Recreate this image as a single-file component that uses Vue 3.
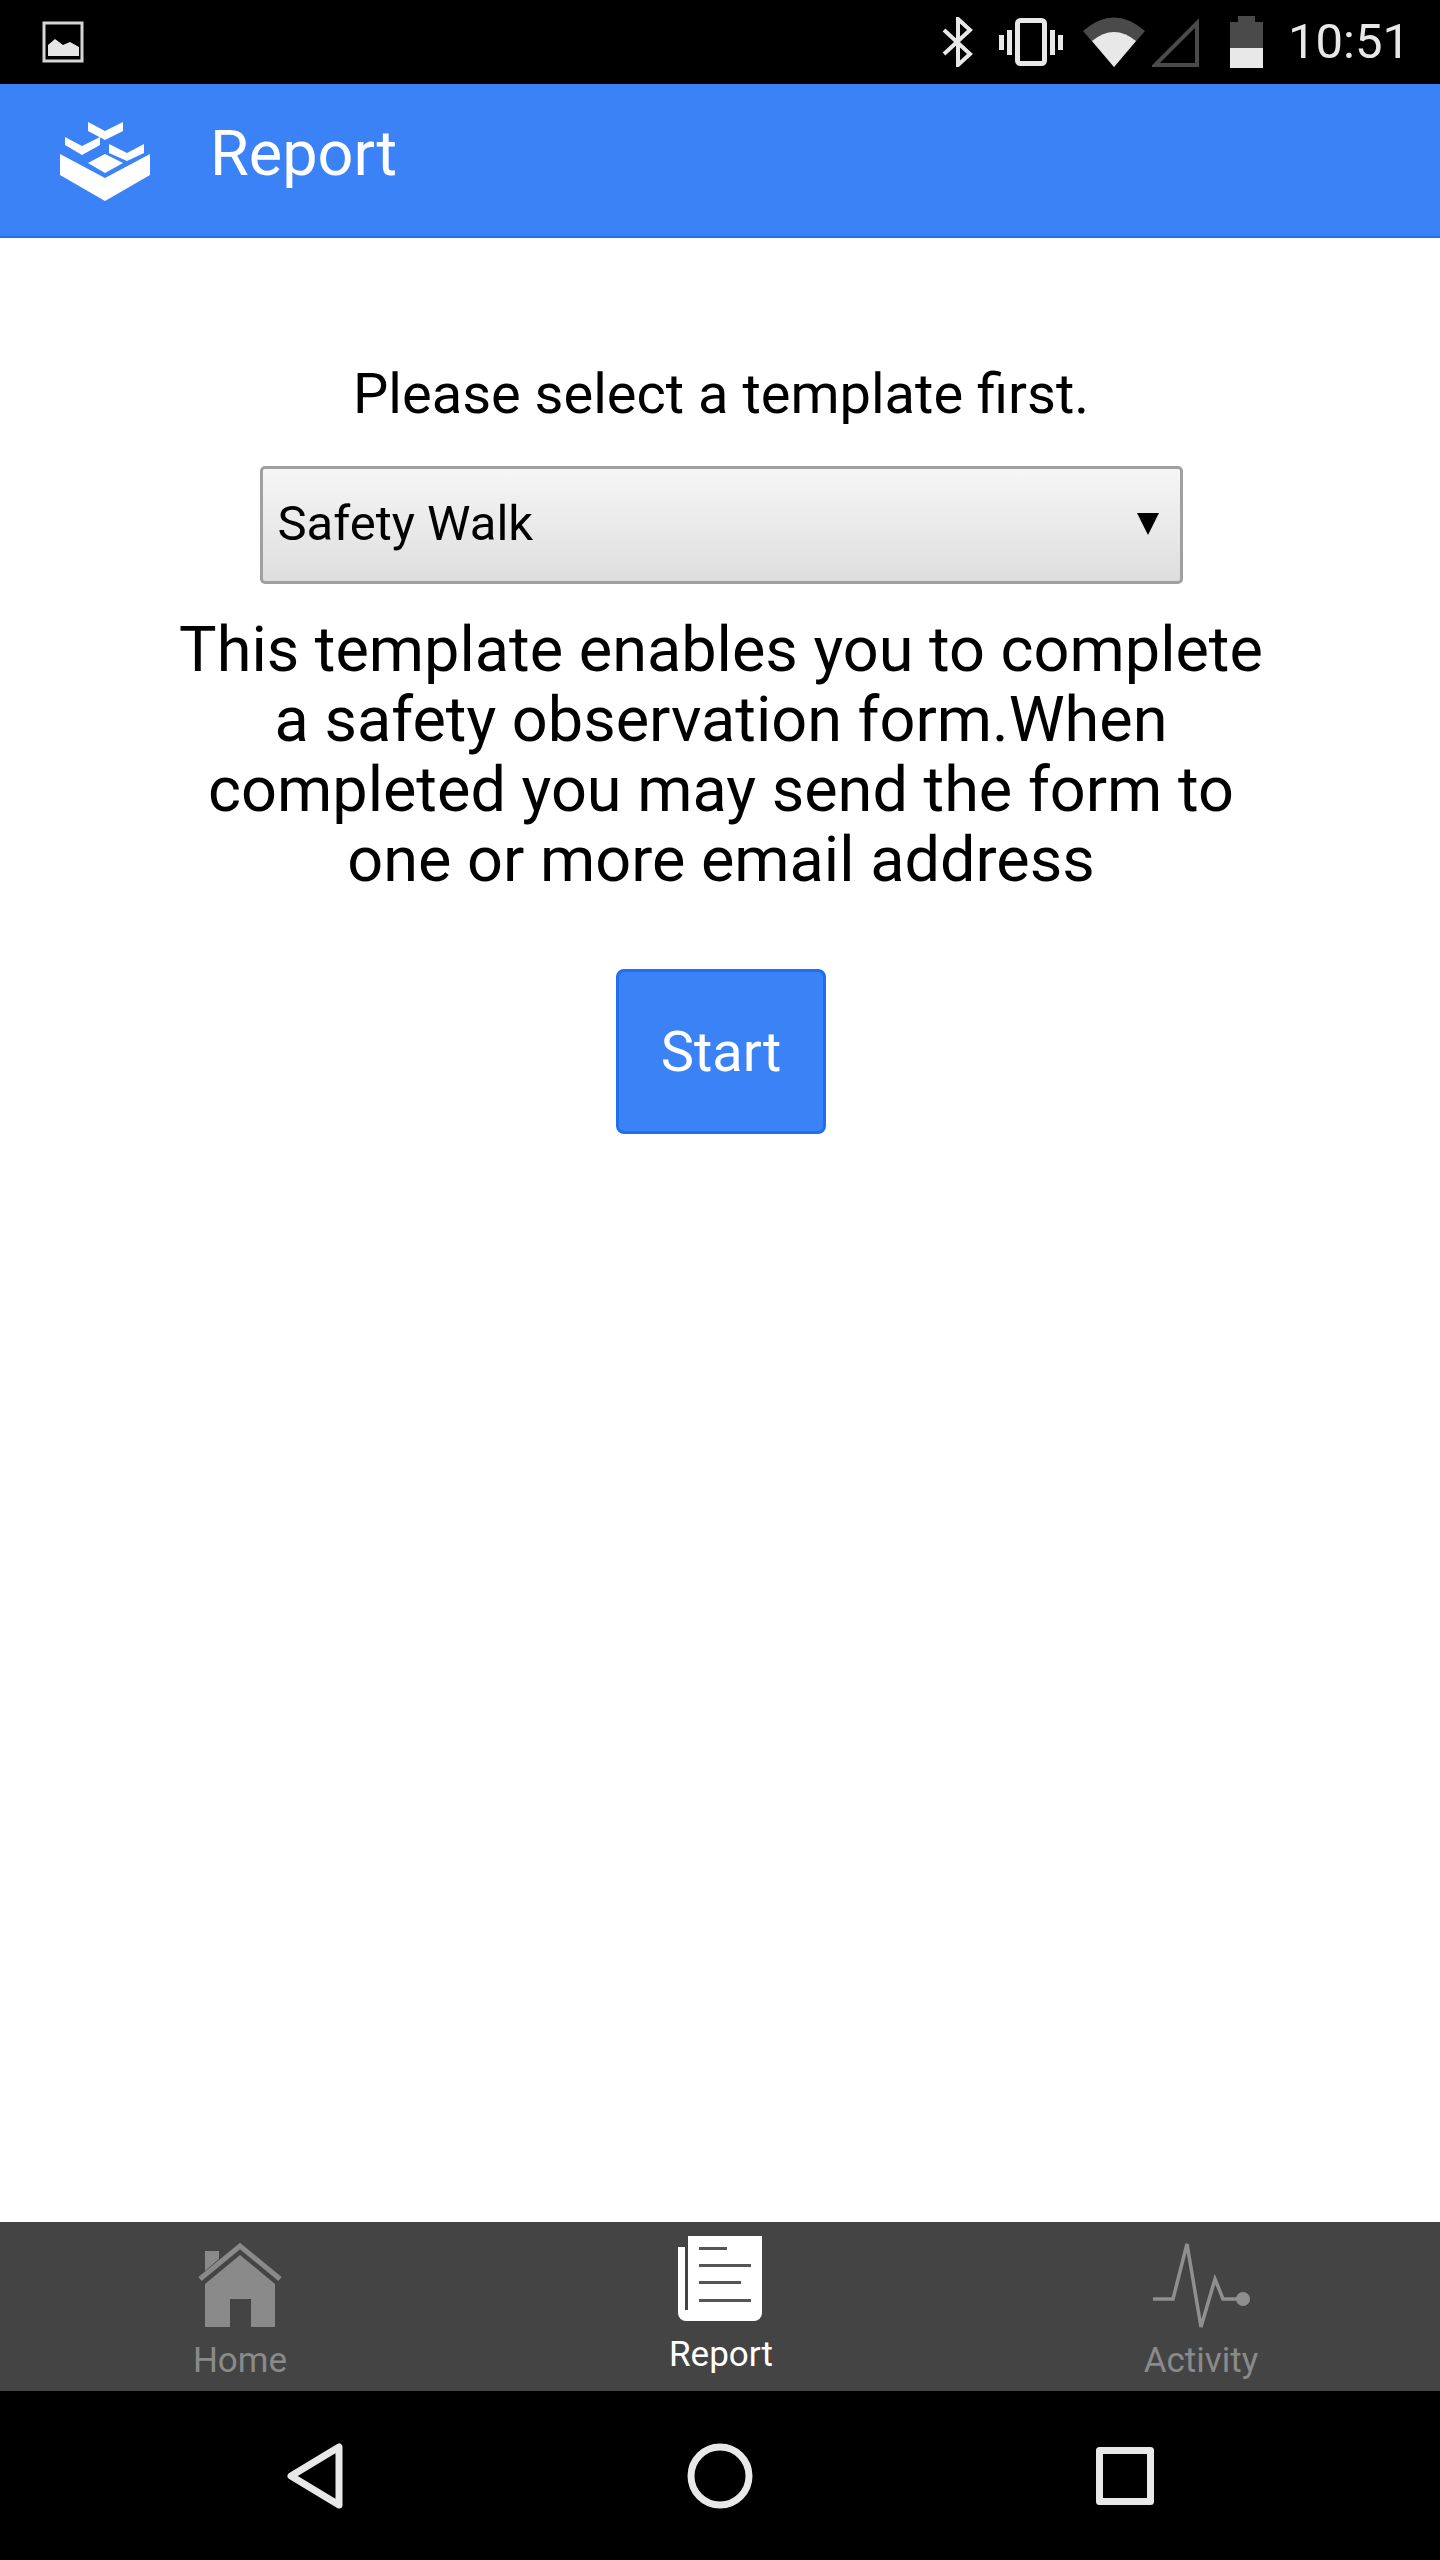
<template>
  <div class="screen">
    <div class="status-bar">
      <svg class="status-image" viewBox="0 0 42 42" width="42" height="42">
        <rect x="2" y="2" width="38" height="38" fill="none" stroke="#d6d6d6" stroke-width="3"/>
        <path d="M6 35V24l7-6 8 6 7-3 9 5v9z" fill="#e6e6e6"/>
      </svg>
      <div class="status-icons">
        <svg viewBox="0 0 32 50" width="32" height="50">
          <path d="M2 13l26 24-12 11V2l12 11L2 37" fill="none" stroke="#e8e8e8" stroke-width="4"/>
        </svg>
        <svg class="vibrate" viewBox="0 0 13 48" width="13" height="48">
          <rect x="0" y="17" width="5" height="15" fill="#e8e8e8"/>
          <rect x="8" y="12" width="5" height="25" fill="#e8e8e8"/>
        </svg>
        <svg viewBox="0 0 32 48" width="32" height="48">
          <rect x="2.500" y="2.500" width="27" height="43" rx="3" fill="none" stroke="#e8e8e8" stroke-width="5"/>
        </svg>
        <svg class="vibrate-right" viewBox="0 0 13 48" width="13" height="48">
          <rect x="0" y="12" width="5" height="25" fill="#e8e8e8"/>
          <rect x="8" y="17" width="5" height="15" fill="#e8e8e8"/>
        </svg>
        <svg class="wifi" viewBox="0 0 62 50" width="62" height="50">
          <path d="M0 14Q31-13 62 14L31 50z" fill="#4a4a4a"/>
          <path d="M9 24Q31 6 53 24L31 50z" fill="#e8e8e8"/>
        </svg>
        <svg class="signal" viewBox="0 0 48 50" width="48" height="50">
          <path d="M45 6v42H3z" fill="none" stroke="#4a4a4a" stroke-width="4"/>
        </svg>
        <svg class="battery" viewBox="0 0 33 52" width="33" height="52">
          <path d="M8 0h17v6h8v26H0V6h8z" fill="#4a4a4a"/>
          <rect x="0" y="32" width="33" height="20" fill="#e8e8e8"/>
        </svg>
        <span class="clock">10:51</span>
      </div>
    </div>

    <header class="app-bar">
      <svg class="logo" viewBox="0 0 90 80" width="90" height="80">
        <path d="M0 32l45 24 45-24v21L45 79 0 53z" fill="#fff"/>
        <path d="M45 32l18 9-18 10-17-10z" fill="#fff"/>
        <path d="M28 0l17 9 18-9v9L45 18 28 9z" fill="#fff"/>
        <path d="M5 15l17 9 18-9v8l-18 10L5 23z" fill="#fff"/>
        <path d="M49 22l18 9 17-9v9l-17 8-18-8z" fill="#fff"/>
      </svg>
      <h1 class="app-title">Report</h1>
    </header>

    <main class="content">
      <p class="prompt">Please select a template first.</p>
      <div class="select-box">
        <span>Safety Walk</span>
        <svg viewBox="0 0 22 22" width="22" height="22">
          <path d="M0 0h22L11 22z" fill="#000"/>
        </svg>
      </div>
      <p class="description">
        This template enables you to complete<br>
        a safety observation form.When<br>
        completed you may send the form to<br>
        one or more email address
      </p>
      <button class="start-btn">Start</button>
    </main>

    <nav class="tab-bar">
      <div class="tab">
        <svg class="tab-icon" viewBox="0 0 84 86" width="84" height="86">
          <path d="M7 41L42 12l35 29v43H53V56H32v28H7z" fill="#8a8a8a"/>
          <path d="M7 8h14v8L7 28z" fill="#8a8a8a"/>
          <path d="M2 36L42 3l40 33" fill="none" stroke="#8a8a8a" stroke-width="5"/>
        </svg>
        <span class="tab-label">Home</span>
      </div>
      <div class="tab tab-active">
        <svg class="tab-icon" viewBox="0 0 84 85" width="84" height="85">
          <path d="M10 0h74v77a8 8 0 0 1-8 8H8a8 8 0 0 1-8-8V11h10z" fill="#fff"/>
          <rect x="7" y="11" width="3" height="63" fill="#444"/>
          <rect x="21" y="11" width="28" height="3" fill="#555"/>
          <rect x="21" y="28" width="52" height="3" fill="#555"/>
          <rect x="21" y="45" width="42" height="3" fill="#555"/>
          <rect x="21" y="63" width="52" height="3" fill="#555"/>
        </svg>
        <span class="tab-label">Report</span>
      </div>
      <div class="tab">
        <svg class="tab-icon" viewBox="0 0 100 86" width="100" height="86">
          <path d="M3 56h20L37 1l14 83 14-48 8 20h20" fill="none" stroke="#8f8f8f" stroke-width="3.500"/>
          <circle cx="93" cy="56" r="7" fill="#8f8f8f"/>
        </svg>
        <span class="tab-label">Activity</span>
      </div>
    </nav>

    <div class="nav-bar">
      <svg viewBox="0 0 56 66" width="56" height="66">
        <path d="M52 4v58L4 33z" fill="none" stroke="#e8e8e8" stroke-width="7" stroke-linejoin="round"/>
      </svg>
      <svg viewBox="0 0 66 66" width="66" height="66">
        <circle cx="33" cy="33" r="29" fill="none" stroke="#e8e8e8" stroke-width="7"/>
      </svg>
      <svg viewBox="0 0 58 58" width="58" height="58">
        <rect x="3.500" y="3.500" width="51" height="51" fill="none" stroke="#e8e8e8" stroke-width="7" stroke-linejoin="round"/>
      </svg>
    </div>
  </div>
</template>

<script setup>
</script>

<style>
html,
body {
  margin: 0;
  background: #fff;
}
</style>

<style scoped>
.screen {
  display: flex;
  flex-direction: column;
  height: 2560px;
  font-family: Roboto, "Liberation Sans", sans-serif;
  color: #000;
  background: #fff;
}

.status-bar {
  display: flex;
  align-items: center;
  justify-content: space-between;
  height: 84px;
  padding: 0 30px 0 42px;
  background: #000;
  flex-shrink: 0;
}

.status-icons {
  display: flex;
  align-items: center;
}

.vibrate {
  margin-left: 25px;
  margin-right: 3px;
}

.vibrate-right {
  margin-left: 3px;
}

.wifi {
  margin-left: 20px;
}

.signal {
  margin-left: 7px;
}

.battery {
  margin-left: 30px;
}

.clock {
  margin-left: 25px;
  font-size: 49px;
  line-height: 84px;
  color: #e8e8e8;
}

.app-bar {
  display: flex;
  align-items: center;
  height: 152px;
  padding-left: 60px;
  background: #3b82f6;
  border-bottom: 2px solid #1f6fef;
  flex-shrink: 0;
}

.logo {
  margin-top: 4px;
}

.app-title {
  margin: 0 0 14px 60px;
  font-size: 63px;
  font-weight: 400;
  color: #fff;
}

.content {
  display: flex;
  flex-direction: column;
  align-items: center;
  flex: 1;
  padding: 121px 0 0 2px;
}

.prompt {
  margin: 0;
  font-size: 56px;
  line-height: 70px;
}

.select-box {
  display: flex;
  align-items: center;
  justify-content: space-between;
  box-sizing: border-box;
  width: 923px;
  height: 118px;
  margin-top: 37px;
  padding: 0 21px 3px 15px;
  font-size: 49px;
  border: 3px solid #a0a0a0;
  border-radius: 5px;
  background: linear-gradient(#f6f6f6, #dedede);
}

.description {
  margin: 31px 0 0;
  font-size: 63px;
  line-height: 70px;
  text-align: center;
}

.start-btn {
  box-sizing: border-box;
  width: 210px;
  height: 165px;
  margin-top: 74px;
  font-family: inherit;
  font-size: 56px;
  color: #fff;
  background: #3b82f6;
  border: 3px solid #1f6fef;
  border-radius: 8px;
}

.tab-bar {
  display: grid;
  grid-template-columns: repeat(3, 1fr);
  height: 169px;
  background: #444;
  flex-shrink: 0;
}

.tab {
  display: flex;
  flex-direction: column;
  align-items: center;
  padding-top: 21px;
  color: #8a8a8a;
}

.tab-icon {
  display: block;
}

.tab-label {
  margin-top: 12px;
  font-size: 35px;
  line-height: 40px;
}

.tab:not(:first-child) .tab-label {
  margin-left: 2px;
}

.tab-active {
  padding-top: 14px;
  color: #fff;
}

.tab-active .tab-label {
  margin-top: 14px;
}

.nav-bar {
  display: grid;
  grid-template-columns: repeat(3, 405px);
  justify-content: center;
  justify-items: center;
  align-items: center;
  height: 169px;
  background: #000;
  flex-shrink: 0;
}

.nav-bar svg {
  display: block;
}
</style>
